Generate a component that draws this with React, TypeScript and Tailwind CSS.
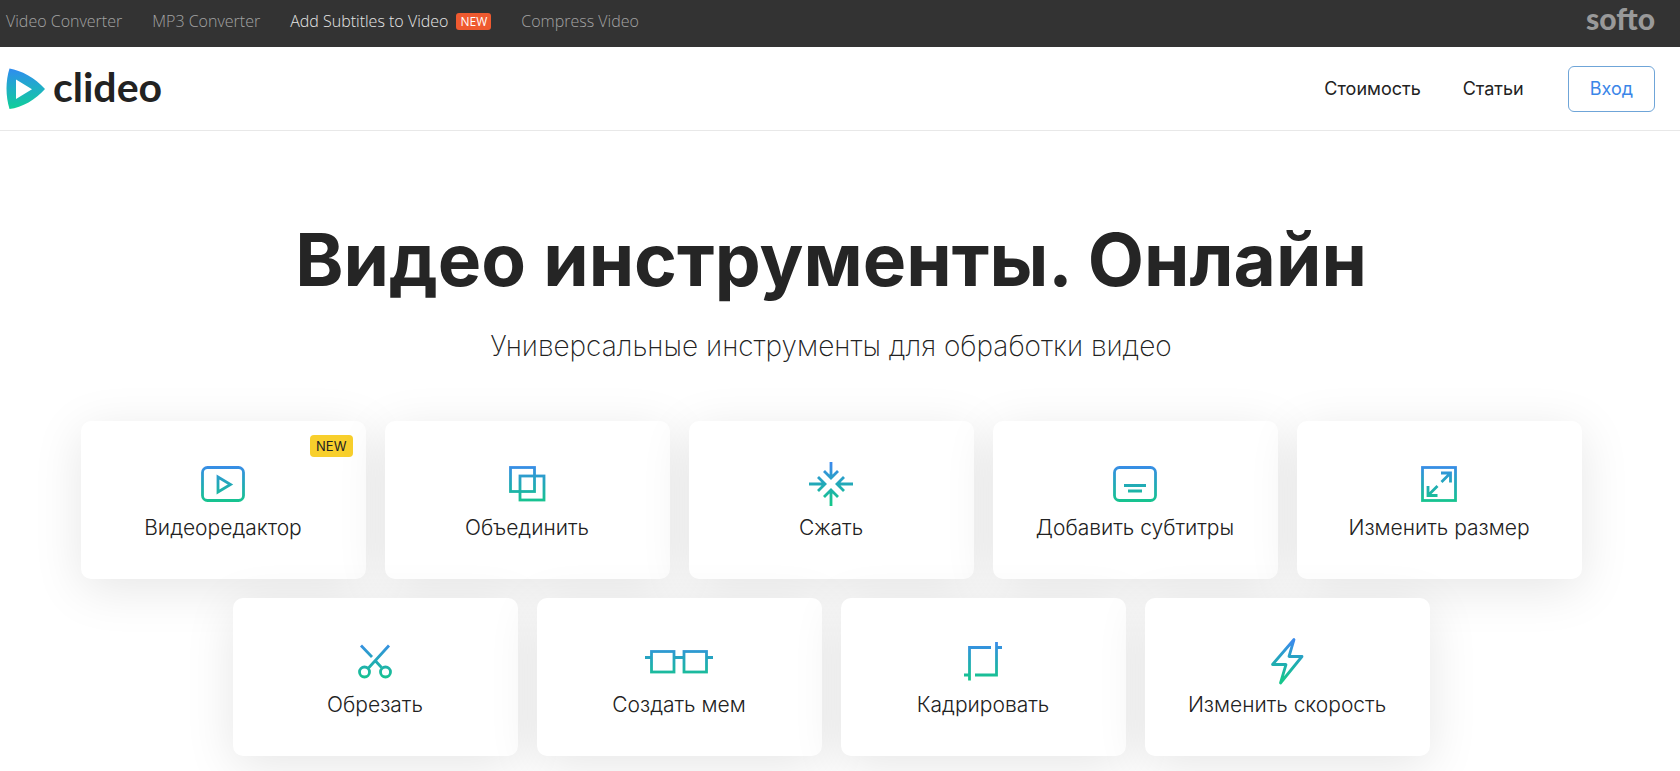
import type { ReactNode } from 'react';

const topLinks = [
  { name: 'Video Converter' },
  { name: 'MP3 Converter' },
  { name: 'Add Subtitles to Video', isNew: true },
  { name: 'Compress Video' },
];

const tools: { name: string; icon: ReactNode; isNew?: boolean }[] = [
  {
    name: 'Видеоредактор',
    isNew: true,
    icon: (
      <>
        <rect x="15.5" y="7.5" width="41" height="33" rx="5" />
        <path d="M31 17v15l12.5-7.5z" />
      </>
    ),
  },
  {
    name: 'Объединить',
    icon: (
      <>
        <rect x="19.5" y="7.5" width="24" height="24" />
        <rect x="29" y="16" width="24" height="24" />
      </>
    ),
  },
  {
    name: 'Сжать',
    icon: (
      <path d="M36 2v16M29 11l7 7 7-7M36 46V30M29 37l7-7 7 7M14 24h16M23 17l7 7-7 7M58 24H42M49 17l-7 7 7 7" />
    ),
  },
  {
    name: 'Добавить субтитры',
    icon: (
      <>
        <rect x="15.5" y="7.5" width="41" height="33" rx="5" />
        <path d="M25 25.5h22M29 31h14" />
      </>
    ),
  },
  {
    name: 'Изменить размер',
    icon: (
      <>
        <rect x="19.5" y="7.5" width="33" height="33" />
        <path d="M38 13h9.5v9.5M47 13.5l-8.5 8.5M25 26v9.5h9.5M25.5 35l9-9" />
      </>
    ),
  },
  {
    name: 'Обрезать',
    icon: (
      <>
        <path d="M22 8.5l11 11.5M50 8.5L29.5 31M37 24.5l5.5 6" />
        <circle cx="25.5" cy="35" r="5" />
        <circle cx="46.5" cy="35" r="5" />
      </>
    ),
  },
  {
    name: 'Создать мем',
    icon: (
      <>
        <rect x="8.5" y="14.5" width="22.5" height="20.5" />
        <rect x="41" y="14.5" width="22.5" height="20.5" />
        <path d="M2 20.5h6.5M31 20.5H41M63.5 20.5H70" />
      </>
    ),
  },
  {
    name: 'Кадрировать',
    icon: <path d="M44 10.5H22.5v33M17 38h5.5M49.5 5v33H28M49.5 10.5H55" />,
  },
  {
    name: 'Изменить скорость',
    icon: <path d="M43 2.5l-5 17h13L29.5 46 35 27.5H21.5z" strokeLinejoin="round" />,
  },
];

function TopBar() {
  return (
    <div className="bg-[#333] h-[47px] pl-[6px] pr-[25px] flex justify-between">
      <nav className="flex gap-[30px] h-[42px] items-center font-['Open_Sans',sans-serif] font-light text-base text-[#a3a3a3]">
        {topLinks.map((link) => (
          <a
            key={link.name}
            href="#"
            className={link.isNew ? 'flex items-center gap-2 text-[#e6e6e6]' : ''}
          >
            {link.name}
            {link.isNew && (
              <span className="bg-[#ef5a30] text-white text-xs leading-[17px] font-normal px-1 rounded-[3px]">
                NEW
              </span>
            )}
          </a>
        ))}
      </nav>
      <a href="#" className="font-['Lato',sans-serif] font-black text-[30px] leading-[36px] text-[#999]">
        softo
      </a>
    </div>
  );
}

function Header() {
  return (
    <header className="h-[84px] pl-[6px] pr-[25px] border-b border-[#e8e8e8] flex items-center justify-between">
      <a href="#" className="flex items-center gap-2">
        <svg className="w-[39px] h-[42px]" viewBox="0 0 39 42" aria-hidden="true">
          <defs>
            <linearGradient id="logo" x1="0" y1="0" x2="0" y2="1">
              <stop offset="0" stopColor="#2f8cf0" />
              <stop offset="0.5" stopColor="#1fb0c4" />
              <stop offset="1" stopColor="#10cf98" />
            </linearGradient>
          </defs>
          <path
            fill="url(#logo)"
            fillRule="evenodd"
            d="M3.5 0.5C15 2.5 29 9.5 39 21C30 31.5 16 39.5 3.5 41C-0.5 28 -0.5 13 3.5 0.5ZM10 11.5V31L26 21.2Z"
          />
        </svg>
        <span className="pb-1 font-['Lato',sans-serif] font-bold text-[41px] leading-[44px] text-[#222]">clideo</span>
      </a>
      <nav className="flex items-center font-['Inter',sans-serif] text-lg text-[#222]">
        <a href="#" className="mr-[42px]">Стоимость</a>
        <a href="#" className="mr-11">Статьи</a>
        <button className="h-[46px] px-[21px] rounded-md border border-[#6fa5d8] text-[#3a86e8]">Вход</button>
      </nav>
    </header>
  );
}

export default function App() {
  return (
    <div className="bg-white text-[#222] font-['Inter',sans-serif]">
      <TopBar />
      <Header />
      <main className="pt-[85px] pr-[18px] pb-4 flex flex-col items-center overflow-hidden">
        <h1 className="text-[73px] leading-[88px] font-bold text-[#252525] text-center">Видео инструменты. Онлайн</h1>
        <p className="mt-[22px] text-[28px] leading-[40px] font-extralight text-center">
          Универсальные инструменты для обработки видео
        </p>

        {/* shared stroke gradient, every icon is drawn on the same 72x48 canvas */}
        <svg className="absolute w-0 h-0" aria-hidden="true">
          <defs>
            <linearGradient id="stroke" gradientUnits="userSpaceOnUse" x1="0" y1="5" x2="0" y2="43">
              <stop offset="0" stopColor="#3a8bea" />
              <stop offset="0.5" stopColor="#22a9b8" />
              <stop offset="1" stopColor="#16c68c" />
            </linearGradient>
          </defs>
        </svg>

        <div className="mt-[55px] w-full max-w-[1520px] flex flex-wrap justify-center gap-x-[19px] gap-y-[19px]">
          {tools.map((tool) => (
            <a
              key={tool.name}
              href="#"
              className="relative w-[285px] pt-[39px] pb-[35px] flex flex-col items-center bg-white rounded-[10px] shadow-[0_10px_50px_rgba(0,0,0,0.1)]"
            >
              {tool.isNew && (
                <span className="absolute top-[14px] right-[13px] bg-[#f8cf2c] text-[13px] leading-[22px] px-[6px] rounded">
                  NEW
                </span>
              )}
              <svg
                className="w-[72px] h-12"
                viewBox="0 0 72 48"
                fill="none"
                stroke="url(#stroke)"
                strokeWidth="2.8"
                aria-hidden="true"
              >
                {tool.icon}
              </svg>
              <span className="mt-1 text-[21px] leading-8 font-light">{tool.name}</span>
            </a>
          ))}
        </div>
      </main>
    </div>
  );
}
